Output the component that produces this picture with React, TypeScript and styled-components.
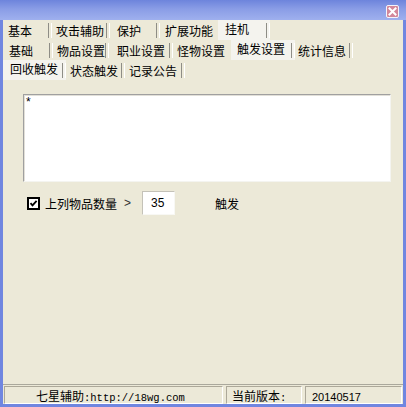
import React from 'react';
import styled, { createGlobalStyle } from 'styled-components';

const GlobalStyle = createGlobalStyle`
  html, body {
    margin: 0;
    padding: 0;
    background: #ece9d8;
  }
  * {
    box-sizing: border-box;
  }
`;

const CJK = `"Noto Sans CJK SC", "Liberation Sans", sans-serif`;

const Window = styled.div`
  width: 406px;
  height: 407px;
  display: flex;
  flex-direction: column;
  background: #7086e0;
  font-family: ${CJK};
  font-size: 12px;
  color: #000;
  overflow: hidden;
`;

const TitleBar = styled.div`
  height: 20px;
  flex: none;
  display: flex;
  align-items: center;
  justify-content: flex-end;
  padding: 0 7px 0 0;
  background: linear-gradient(180deg, #6d84dc 0%, #8a9de6 45%, #9fb0ee 100%);
`;

const CloseButton = styled.div`
  width: 13px;
  height: 13px;
  margin-top: 2px;
  border: 1px solid #f4f4fb;
  border-radius: 2px;
  background: #d3879a;
  display: flex;
  align-items: center;
  justify-content: center;
`;

const Frame = styled.div`
  flex: 1;
  margin: 0 3px 3px 3px;
  background: #ece9d8;
  display: flex;
  flex-direction: column;
`;

const TabRow = styled.div`
  height: 20px;
  flex: none;
  display: flex;
`;

const Tab = styled.div<{ $width: number; $pad: number; $active?: boolean; $sep?: boolean }>`
  position: relative;
  width: ${p => p.$width}px;
  flex: none;
  padding-left: ${p => p.$pad}px;
  padding-top: ${p => (p.$active ? 0 : 2)}px;
  line-height: 18px;
  white-space: nowrap;
  background: ${p => (p.$active ? '#f4f3ee' : 'transparent')};

  &::after {
    content: '';
    display: ${p => (p.$sep ? 'block' : 'none')};
    position: absolute;
    right: 0;
    top: 3px;
    bottom: 2px;
    width: 2px;
    border-left: 1px solid #8e8d86;
    border-right: 1px solid #ffffff;
  }
`;

const Content = styled.div`
  flex: 1;
  display: flex;
  flex-direction: column;
  padding: 14px 12px 0 20px;
`;

const TextBox = styled.div`
  height: 88px;
  background: #ffffff;
  border-top: 1px solid #a0a0a0;
  border-left: 1px solid #a0a0a0;
  border-right: 1px solid #f4f4f0;
  border-bottom: 1px solid #f4f4f0;
  box-shadow: inset 1px 1px 0 #e2e0d8;
  padding: 1px 0 0 2px;
  font-family: "Liberation Sans", sans-serif;
  font-size: 12px;
  line-height: 12px;
`;

const OptionRow = styled.div`
  display: flex;
  align-items: center;
  height: 24px;
  margin-top: 9px;
  padding-left: 4px;
`;

const Label = styled.span`
  margin-left: 5px;
`;

const Gt = styled.span`
  margin-left: 7px;
  font-family: "Liberation Sans", sans-serif;
  color: #333;
`;

const NumberBox = styled.div`
  width: 33px;
  height: 24px;
  margin-left: 11px;
  background: #ffffff;
  border-top: 1px solid #c4c2b8;
  border-left: 1px solid #c4c2b8;
  border-right: 1px solid #f8f8f4;
  border-bottom: 1px solid #f8f8f4;
  padding-left: 8px;
  line-height: 22px;
  font-family: "Liberation Sans", sans-serif;
  font-size: 12px;
`;

const TriggerLabel = styled.span`
  margin-left: 40px;
`;

const StatusBar = styled.div`
  height: 20px;
  flex: none;
  display: flex;
  gap: 3px;
  padding: 1px 1px 0 1px;
  border-top: 1px solid #aaa89c;
`;

const StatusPanel = styled.div<{ $width: number; $pad: number }>`
  width: ${p => p.$width}px;
  flex: none;
  padding-left: ${p => p.$pad}px;
  border-top: 1px solid #aca899;
  border-left: 1px solid #aca899;
  border-right: 1px solid #ffffff;
  border-bottom: 1px solid #ffffff;
  line-height: 17px;
  white-space: nowrap;
`;

const Mono = styled.span`
  font-family: "Liberation Mono", monospace;
  font-size: 10.5px;
`;

const Digits = styled.span`
  font-family: "Liberation Sans", sans-serif;
  font-size: 11px;
`;

type TabDef = { label: string; width: number; pad: number; active?: boolean };

const rows: TabDef[][] = [
  [
    { label: '基本', width: 49, pad: 5 },
    { label: '攻击辅助', width: 58, pad: 4 },
    { label: '保护', width: 50, pad: 7 },
    { label: '扩展功能', width: 58, pad: 5 },
    { label: '挂机', width: 52, pad: 7, active: true },
  ],
  [
    { label: '基础', width: 50, pad: 6 },
    { label: '物品设置', width: 56, pad: 4 },
    { label: '职业设置', width: 64, pad: 8 },
    { label: '怪物设置', width: 58, pad: 4 },
    { label: '触发设置', width: 64, pad: 6, active: true },
    { label: '统计信息', width: 58, pad: 3 },
  ],
  [
    { label: '回收触发', width: 63, pad: 7, active: true },
    { label: '状态触发', width: 59, pad: 4 },
    { label: '记录公告', width: 60, pad: 4 },
  ],
];

const CloseIcon = () => (
  <svg width="9" height="9" viewBox="0 0 9 9">
    <path d="M1.5 1.5 L7.5 7.5 M7.5 1.5 L1.5 7.5" stroke="#fff" strokeWidth="2" strokeLinecap="square" />
  </svg>
);

const CheckIcon = () => (
  <svg width="13" height="13" viewBox="0 0 13 13">
    <rect x="1" y="1" width="11" height="11" fill="#fff" stroke="#000" strokeWidth="2" />
    <path d="M3.5 6.2 L5.5 8.4 L9.6 3.8" fill="none" stroke="#000" strokeWidth="1.8" />
  </svg>
);

export default function App() {
  return (
    <>
      <GlobalStyle />
      <Window>
        <TitleBar>
          <CloseButton>
            <CloseIcon />
          </CloseButton>
        </TitleBar>
        <Frame>
          {rows.map((row, ri) => (
            <TabRow key={ri}>
              {row.map((t, i) => (
                <Tab
                  key={t.label}
                  $width={t.width}
                  $pad={t.pad}
                  $active={t.active}
                  $sep={!row[i + 1]?.active}
                >
                  {t.label}
                </Tab>
              ))}
            </TabRow>
          ))}

          <Content>
            <TextBox>*</TextBox>
            <OptionRow>
              <CheckIcon />
              <Label>上列物品数量</Label>
              <Gt>&gt;</Gt>
              <NumberBox>35</NumberBox>
              <TriggerLabel>触发</TriggerLabel>
            </OptionRow>
          </Content>

          <StatusBar>
            <StatusPanel $width={219} $pad={31}>
              七星辅助<Mono>:http://18wg.com</Mono>
            </StatusPanel>
            <StatusPanel $width={76} $pad={5}>
              当前版本<Mono>:</Mono>
            </StatusPanel>
            <StatusPanel $width={97} $pad={6}>
              <Digits>20140517</Digits>
            </StatusPanel>
          </StatusBar>
        </Frame>
      </Window>
    </>
  );
}
